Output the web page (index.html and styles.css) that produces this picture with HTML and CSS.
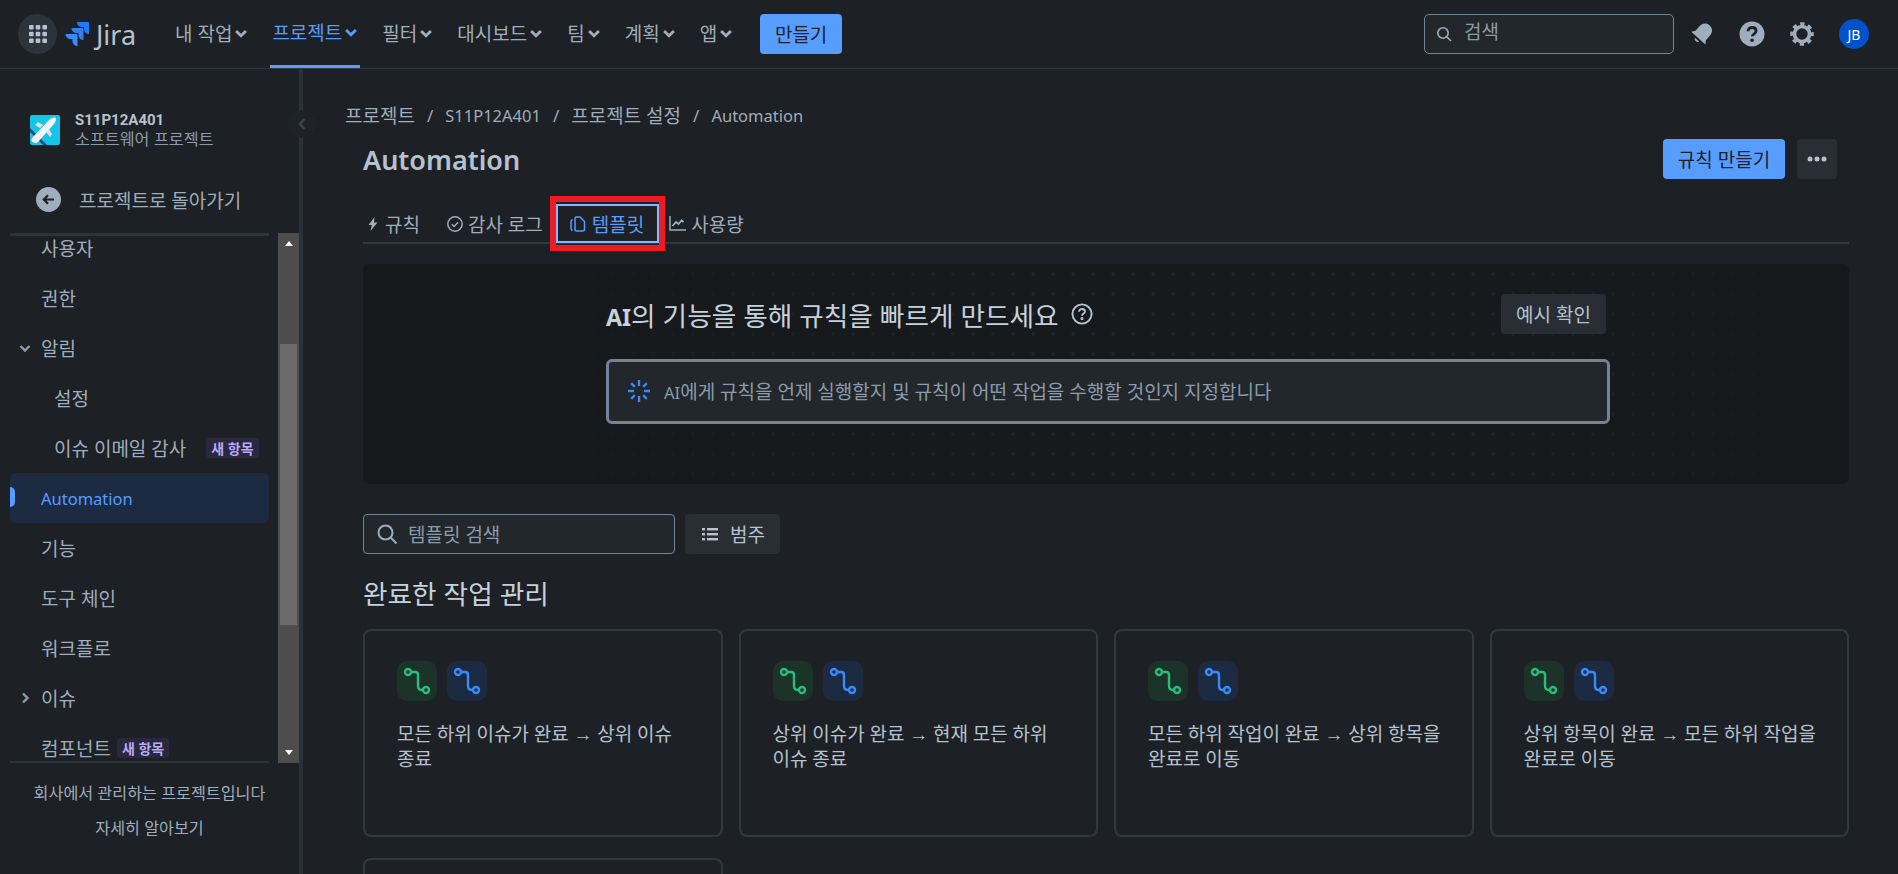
FILE: index.html
```html
<!DOCTYPE html>
<html lang="ko">
<head>
<meta charset="utf-8">
<title>Automation</title>
<link rel="stylesheet" href="styles.css">
</head>
<body>
<header class="topbar">
	<div class="apps">
		<svg width="18" height="18" viewBox="0 0 18 18" fill="#B6C2CF"><rect x="0" y="0" width="4.6" height="4.6" rx="1"/><rect x="6.7" y="0" width="4.6" height="4.6" rx="1"/><rect x="13.4" y="0" width="4.6" height="4.6" rx="1"/><rect x="0" y="6.7" width="4.6" height="4.6" rx="1"/><rect x="6.7" y="6.7" width="4.6" height="4.6" rx="1"/><rect x="13.4" y="6.7" width="4.6" height="4.6" rx="1"/><rect x="0" y="13.4" width="4.6" height="4.6" rx="1"/><rect x="6.7" y="13.4" width="4.6" height="4.6" rx="1"/><rect x="13.4" y="13.4" width="4.6" height="4.6" rx="1"/></svg>
	</div>
	<div class="logo">
		<svg width="24" height="24" viewBox="0 0 24 24"><path fill="#1D7AFC" d="M23 0H12c0 2.7 2.2 5 5 5h2v2c0 2.8 2.2 5 5 5V1a1 1 0 0 0-1-1z"/><path fill="#357DE8" d="M17.5 6h-11c0 2.7 2.2 5 5 5h2v2c0 2.8 2.2 5 5 5V7a1 1 0 0 0-1-1z"/><path fill="#388BFF" d="M11.5 12H.5c0 2.7 2.2 5 5 5h2v2c0 2.8 2.2 5 5 5V13a1 1 0 0 0-1-1z"/></svg>
		<span class="logo-name">Jira</span>
	</div>
	<nav class="topnav">
		<a class="topnav-item">내 작업<svg class="chev" viewBox="0 0 10 10"><path d="M1.5 3.5 5 7l3.5-3.5"/></svg></a>
		<a class="topnav-item active">프로젝트<svg class="chev" viewBox="0 0 10 10"><path d="M1.5 3.5 5 7l3.5-3.5"/></svg></a>
		<a class="topnav-item">필터<svg class="chev" viewBox="0 0 10 10"><path d="M1.5 3.5 5 7l3.5-3.5"/></svg></a>
		<a class="topnav-item">대시보드<svg class="chev" viewBox="0 0 10 10"><path d="M1.5 3.5 5 7l3.5-3.5"/></svg></a>
		<a class="topnav-item">팀<svg class="chev" viewBox="0 0 10 10"><path d="M1.5 3.5 5 7l3.5-3.5"/></svg></a>
		<a class="topnav-item">계획<svg class="chev" viewBox="0 0 10 10"><path d="M1.5 3.5 5 7l3.5-3.5"/></svg></a>
		<a class="topnav-item">앱<svg class="chev" viewBox="0 0 10 10"><path d="M1.5 3.5 5 7l3.5-3.5"/></svg></a>
	</nav>
	<button class="btn primary create">만들기</button>
	<div class="spacer"></div>
	<div class="topsearch">
		<svg width="16" height="16" viewBox="0 0 16 16" fill="none" stroke="#9FADBC" stroke-width="1.6"><circle cx="7" cy="7" r="5.2"/><path d="m11 11 4 4"/></svg>
		<span>검색</span>
	</div>
	<div class="topicons">
		<svg width="26" height="26" viewBox="0 0 26 26" fill="#9FADBC"><g transform="rotate(42 13 13)"><path d="M13 1.500c-4.400 0-7 3.300-7 7.500v6l-2.500 3.500h19L20 15V9c0-4.200-2.600-7.500-7-7.500z"/><path d="M10.300 20.500a2.800 2.800 0 0 0 5.400 0z"/></g></svg>
		<svg width="26" height="26" viewBox="0 0 26 26"><circle cx="13" cy="13" r="12.500" fill="#9FADBC"/><path d="M9 10.300c0-2.400 1.800-3.800 4.100-3.800s4 1.400 4 3.500c0 3-3.900 3-3.900 5.300" fill="none" stroke="#1D2125" stroke-width="2.800"/><circle cx="13.100" cy="19.300" r="1.800" fill="#1D2125"/></svg>
		<svg width="26" height="26" viewBox="0 0 26 26" fill="none" stroke="#9FADBC"><circle cx="13" cy="13" r="7.500" stroke-width="3.600"/><circle cx="13" cy="13" r="10.300" stroke-width="3" stroke-dasharray="4.300 3.790" stroke-dashoffset="2.150"/></svg>
		<div class="avatar">JB</div>
	</div>
</header>

<div class="page">
	<aside class="sidebar">
		<div class="project">
			<svg class="project-icon" width="30" height="30" viewBox="0 0 30 30"><rect width="30" height="30" rx="2" fill="#14C5E8"/><path d="M0 13 17 30h-4L0 17z" fill="#2B4A7C"/><path d="M3 22 19 5c2-2 5.500-3 6.500-2s0 4.500-2 6.500L8 27c-1.500 1.500-5 1-6-.5s-.5-3 1-4.500z" fill="#F4F5F7"/><path d="m5 10 3-3 5 3-3 3zM20 22l2-3-3-5-3 3z" fill="#DFE1E6"/></svg>
			<div>
				<div class="project-name">S11P12A401</div>
				<div class="project-sub">소프트웨어 프로젝트</div>
			</div>
		</div>
		<div class="back">
			<svg width="25" height="25" viewBox="0 0 25 25"><circle cx="12.500" cy="12.500" r="12.500" fill="#9FADBC"/><path d="M18 12.500H8m4-4.200-4.200 4.200 4.200 4.200" fill="none" stroke="#1D2125" stroke-width="2.200"/></svg>
			<span>프로젝트로 돌아가기</span>
		</div>
		<div class="navwrap">
			<div class="navscroll">
				<ul class="sidenav">
					<li class="side-item">사용자</li>
					<li class="side-item">권한</li>
					<li class="side-item"><svg class="side-chev" viewBox="0 0 12 12"><path d="M1.500 4 6 8.500 10.500 4"/></svg>알림</li>
					<li class="side-item sub">설정</li>
					<li class="side-item sub">이슈 이메일 감사<span class="badge">새 항목</span></li>
					<li class="side-item selected"><span class="lat-big">Automation</span></li>
					<li class="side-item">기능</li>
					<li class="side-item">도구 체인</li>
					<li class="side-item">워크플로</li>
					<li class="side-item"><svg class="side-chev" viewBox="0 0 12 12"><path d="M4 1.500 8.500 6 4 10.500"/></svg>이슈</li>
					<li class="side-item">컴포넌트<span class="badge tight">새 항목</span></li>
				</ul>
			</div>
			<div class="scrollbar">
				<div class="arrow up"></div>
				<div class="track"><div class="thumb"></div></div>
				<div class="arrow down"></div>
			</div>
		</div>
		<div class="side-foot">
			<div>회사에서 관리하는 프로젝트입니다</div>
			<div class="learn">자세히 알아보기</div>
		</div>
		<div class="collapse"><svg width="10" height="14" viewBox="0 0 10 14" fill="none" stroke="#3A424A" stroke-width="2.500"><path d="M7.500 2 3 7l4.500 5"/></svg></div>
	</aside>

	<main class="main">
		<div class="crumbs">
			<span>프로젝트</span><i>/</i><span class="lat-big">S11P12A401</span><i>/</i><span>프로젝트 설정</span><i>/</i><span class="lat-big">Automation</span>
		</div>
		<div class="titlerow">
			<h1 class="title">Automation</h1>
			<button class="btn primary rule">규칙 만들기</button>
			<button class="btn neutral more"><svg width="20" height="6" viewBox="0 0 20 6" fill="#B6C2CF"><circle cx="3" cy="3" r="2.500"/><circle cx="10" cy="3" r="2.500"/><circle cx="17" cy="3" r="2.500"/></svg></button>
		</div>

		<div class="tabs">
			<a class="tab first"><svg width="12" height="16" viewBox="0 0 12 16" fill="#9FADBC"><path d="M7.500 1 1.500 9h3.300L3.500 15l7-8.500H7z"/></svg>규칙</a>
			<a class="tab audit"><svg width="16" height="16" viewBox="0 0 16 16" fill="none" stroke="#9FADBC" stroke-width="1.500"><circle cx="8" cy="8" r="7.200"/><path d="m4.800 8.200 2.300 2.200 4-4.200"/></svg>감사 로그</a>
			<a class="tab current"><svg width="16" height="16" viewBox="0 0 16 16" fill="none" stroke="#579DFF" stroke-width="1.500"><path d="M2.500 3.500C1.500 4 1 5 1 6v6c0 1 .5 2 1.500 2.500"/><path d="M5 2.500a1.500 1.500 0 0 1 1.500-1.500H10l4.500 4.500v8a1.500 1.500 0 0 1-1.500 1.500H6.500A1.500 1.500 0 0 1 5 13.500z"/></svg>템플릿</a>
			<a class="tab usage"><svg width="17" height="15" viewBox="0 0 17 15" fill="none" stroke="#9FADBC" stroke-width="1.500"><path d="M1 0v14h16"/><path d="m3.500 10 3.500-4 2.500 2 3-3.500 2 1.500" stroke-width="1.800"/></svg>사용량</a>
		</div>

		<section class="hero">
			<div class="hero-inner">
				<div class="hero-head">
					<h2 class="hero-title"><b class="lat">AI</b>의 기능을 통해 규칙을 빠르게 만드세요</h2>
					<svg class="hero-help" width="22" height="22" viewBox="0 0 20 20" fill="none" stroke="#B6C2CF" stroke-width="1.700"><circle cx="10" cy="10" r="8.700"/><path d="M7.300 8c0-1.600 1.200-2.500 2.700-2.500s2.700.9 2.700 2.300c0 2-2.700 2-2.700 3.700"/><circle cx="10" cy="14.200" r=".6"/></svg>
					<div class="spacer"></div>
					<button class="btn neutral example">예시 확인</button>
				</div>
				<div class="ai-input">
					<svg width="22" height="22" viewBox="0 0 22 22" fill="none" stroke="#388BFF" stroke-width="2.400"><path d="M11 0v6M11 16v6M0 11h6M16 11h6M3.200 3.200l3.600 3.600M15.200 15.200l3.600 3.600M18.800 3.200l-3.600 3.600M6.800 15.200l-3.600 3.600"/></svg>
					<span><span class="lat">AI</span>에게 규칙을 언제 실행할지 및 규칙이 어떤 작업을 수행할 것인지 지정합니다</span>
				</div>
			</div>
		</section>

		<div class="filters">
			<div class="tpl-search">
				<svg width="20" height="20" viewBox="0 0 20 20" fill="none" stroke="#9FADBC" stroke-width="2"><circle cx="8.500" cy="8.500" r="7"/><path d="m13.500 13.500 6 6"/></svg>
				<span>템플릿 검색</span>
			</div>
			<button class="btn neutral cats"><svg width="16" height="14" viewBox="0 0 16 14" fill="#B6C2CF"><rect y="1" width="3" height="2.400"/><rect x="5" y="1" width="11" height="2.400"/><rect y="6" width="3" height="2.400"/><rect x="5" y="6" width="11" height="2.400"/><rect y="11" width="3" height="2.400"/><rect x="5" y="11" width="11" height="2.400"/></svg>범주</button>
		</div>

		<h2 class="group-title">완료한 작업 관리</h2>

		<div class="cards">
			<div class="card">
				<div class="tiles">
					<div class="tile green"><svg width="40" height="40" viewBox="0 0 40 40" fill="none" stroke="#2ABB7F" stroke-width="2.400"><circle cx="11" cy="11" r="3"/><path d="M14 11h4q3 0 3 3v11q0 4 4 4h1"/><circle cx="29" cy="29" r="3"/></svg></div>
					<div class="tile blue"><svg width="40" height="40" viewBox="0 0 40 40" fill="none" stroke="#388BFF" stroke-width="2.400"><circle cx="11" cy="11" r="3"/><path d="M14 11h4q3 0 3 3v11q0 4 4 4h1"/><circle cx="29" cy="29" r="3"/></svg></div>
				</div>
				<p class="card-text">모든 하위 이슈가 완료 → 상위 이슈 종료</p>
			</div>
			<div class="card">
				<div class="tiles">
					<div class="tile green"><svg width="40" height="40" viewBox="0 0 40 40" fill="none" stroke="#2ABB7F" stroke-width="2.400"><circle cx="11" cy="11" r="3"/><path d="M14 11h4q3 0 3 3v11q0 4 4 4h1"/><circle cx="29" cy="29" r="3"/></svg></div>
					<div class="tile blue"><svg width="40" height="40" viewBox="0 0 40 40" fill="none" stroke="#388BFF" stroke-width="2.400"><circle cx="11" cy="11" r="3"/><path d="M14 11h4q3 0 3 3v11q0 4 4 4h1"/><circle cx="29" cy="29" r="3"/></svg></div>
				</div>
				<p class="card-text">상위 이슈가 완료 → 현재 모든 하위 이슈 종료</p>
			</div>
			<div class="card">
				<div class="tiles">
					<div class="tile green"><svg width="40" height="40" viewBox="0 0 40 40" fill="none" stroke="#2ABB7F" stroke-width="2.400"><circle cx="11" cy="11" r="3"/><path d="M14 11h4q3 0 3 3v11q0 4 4 4h1"/><circle cx="29" cy="29" r="3"/></svg></div>
					<div class="tile blue"><svg width="40" height="40" viewBox="0 0 40 40" fill="none" stroke="#388BFF" stroke-width="2.400"><circle cx="11" cy="11" r="3"/><path d="M14 11h4q3 0 3 3v11q0 4 4 4h1"/><circle cx="29" cy="29" r="3"/></svg></div>
				</div>
				<p class="card-text">모든 하위 작업이 완료 → 상위 항목을 완료로 이동</p>
			</div>
			<div class="card">
				<div class="tiles">
					<div class="tile green"><svg width="40" height="40" viewBox="0 0 40 40" fill="none" stroke="#2ABB7F" stroke-width="2.400"><circle cx="11" cy="11" r="3"/><path d="M14 11h4q3 0 3 3v11q0 4 4 4h1"/><circle cx="29" cy="29" r="3"/></svg></div>
					<div class="tile blue"><svg width="40" height="40" viewBox="0 0 40 40" fill="none" stroke="#388BFF" stroke-width="2.400"><circle cx="11" cy="11" r="3"/><path d="M14 11h4q3 0 3 3v11q0 4 4 4h1"/><circle cx="29" cy="29" r="3"/></svg></div>
				</div>
				<p class="card-text">상위 항목이 완료 → 모든 하위 작업을 완료로 이동</p>
			</div>
			<div class="card"></div>
		</div>
	</main>
</div>
</body>
</html>
```

FILE: styles.css
```css
* {
	box-sizing: border-box;
}
html, body {
	margin: 0;
	height: 100%;
	overflow: hidden;
}
body {
	background: #1D2125;
	color: #B6C2CF;
	font-family: "Noto Sans", "Noto Sans CJK KR", sans-serif;
	font-size: 19px;
}
.spacer {
	flex: 1;
}
.lat {
	font-size: .87em;
}
.lat-big {
	font-size: 16.5px;
}
.btn {
	border: 0;
	border-radius: 4px;
	font: inherit;
	height: 40px;
	padding: 0 0 1px;
	display: flex;
	align-items: center;
	justify-content: center;
}
.btn.primary {
	background: #579DFF;
	color: #1D2125;
}
.btn.neutral {
	background: #282E33;
	color: #B6C2CF;
}

/* top bar */
.topbar {
	height: 69px;
	border-bottom: 1px solid #31383F;
	display: flex;
	align-items: center;
	padding: 0 29px 0 18px;
}
.apps {
	width: 39px;
	height: 40px;
	border-radius: 50%;
	background: #2C333A;
	display: flex;
	align-items: center;
	justify-content: center;
}
.logo {
	display: flex;
	align-items: center;
	margin-left: 8px;
	gap: 7px;
	width: 96px;
}
.logo-name {
	font-size: 27px;
	color: #B6C2CF;
}
.topnav {
	display: flex;
	height: 68px;
	margin-left: 12px;
}
.topnav-item {
	display: flex;
	align-items: center;
	padding: 0 2px 2px;
	margin-right: 20px;
	color: #9FADBC;
}
.topnav-item.active {
	color: #579DFF;
	border-bottom: 3px solid #579DFF;
	padding-top: 1px;
}
.chev {
	width: 14px;
	height: 14px;
	margin-left: 2px;
	fill: none;
	stroke: currentColor;
	stroke-width: 2;
}
.create {
	width: 82px;
	margin-left: 5px;
}
.topsearch {
	width: 250px;
	height: 40px;
	background: #22272B;
	border: 1px solid #738496;
	border-radius: 5px;
	display: flex;
	align-items: center;
	gap: 12px;
	padding: 0 11px;
	color: #8C9BAB;
}
.topsearch span {
	margin-top: -6px;
}
.topicons {
	display: flex;
	align-items: center;
	gap: 24px;
	margin-left: 15px;
}
.avatar {
	width: 30px;
	height: 30px;
	border-radius: 50%;
	background: #0052CC;
	color: #fff;
	font-size: 14px;
	display: flex;
	align-items: center;
	justify-content: center;
}

/* sidebar */
.page {
	display: flex;
	height: 805px;
}
.sidebar {
	width: 303px;
	flex: none;
	border-right: 4px solid #2C3138;
	display: flex;
	flex-direction: column;
	position: relative;
}
.project {
	display: flex;
	align-items: center;
	gap: 15px;
	padding: 42px 0 0 30px;
}
.project-name {
	font-family: Roboto, sans-serif;
	font-size: 15px;
	font-weight: 700;
	line-height: 19px;
}
.project-sub {
	font-family: "Liberation Sans", "Noto Sans CJK KR", sans-serif;
	font-size: 16.2px;
	color: #8C9BAB;
	line-height: 18px;
}
.back {
	display: flex;
	align-items: center;
	gap: 18px;
	padding-left: 36px;
	margin-top: 39px;
	height: 25px;
	color: #9FADBC;
}
.navwrap {
	display: flex;
	height: 530px;
	margin-top: 21px;
}
.navscroll {
	width: 260px;
	margin: 0 9px 0 10px;
	overflow: hidden;
	border-top: 3px solid #2C333A;
	border-bottom: 2px solid #2C333A;
}
.sidenav {
	list-style: none;
	margin: -13px 0 0;
	padding: 0;
}
.side-item {
	height: 50px;
	display: flex;
	align-items: center;
	padding-left: 31px;
	color: #9FADBC;
	position: relative;
}
.side-item.sub {
	padding-left: 44px;
}
.side-item.selected {
	background: #1C2B41;
	color: #579DFF;
	border-radius: 6px;
}
.side-item.selected::before {
	content: "";
	position: absolute;
	left: 0;
	top: 14px;
	width: 5px;
	height: 20px;
	background: #579DFF;
	border-radius: 0 5px 5px 0;
}
.side-chev {
	position: absolute;
	left: 9px;
	width: 12px;
	height: 12px;
	fill: none;
	stroke: #8C9BAB;
	stroke-width: 2.400;
}
.badge {
	background: #2B273F;
	color: #B8ACF6;
	font-size: 14px;
	font-weight: 700;
	border-radius: 4px;
	height: 20px;
	padding: 0 5px;
	display: flex;
	align-items: center;
	margin-left: 20px;
}
.badge.tight {
	margin-left: 6px;
}
.scrollbar {
	width: 21px;
	background: #4D4D4D;
	display: flex;
	flex-direction: column;
	align-items: center;
}
.arrow {
	height: 21px;
	flex: none;
	display: flex;
	align-items: center;
}
.arrow::before {
	content: "";
	border-left: 4px solid transparent;
	border-right: 4px solid transparent;
}
.arrow.up::before {
	border-bottom: 5px solid #fff;
}
.arrow.down::before {
	border-top: 5px solid #fff;
}
.track {
	flex: 1;
	width: 100%;
	padding: 90px 2px 117px;
}
.thumb {
	height: 100%;
	background: #6B6B6B;
}
.side-foot {
	text-align: center;
	font-size: 16.2px;
	color: #9FADBC;
	padding-top: 17px;
}
.side-foot .learn {
	margin-top: 11px;
}
.collapse {
	position: absolute;
	top: 41px;
	right: -17px;
	width: 28px;
	height: 28px;
	border-radius: 50%;
	background: #1F2327;
	display: flex;
	align-items: center;
	justify-content: center;
}

/* main */
.main {
	flex: 1;
	min-width: 0;
	padding: 34px 49px 0 60px;
	overflow: hidden;
}
.crumbs {
	margin-left: -18px;
	height: 24px;
	display: flex;
	align-items: center;
	color: #9FADBC;
}
.crumbs i {
	font-style: normal;
	font-size: 17px;
	margin: 0 12px;
}
.titlerow {
	display: flex;
	align-items: center;
	margin-top: 12px;
	height: 40px;
	padding-right: 12px;
}
.title {
	flex: 1;
	margin: 0;
	font-size: 27px;
	font-weight: 600;
	color: #B6C2CF;
}
.rule {
	width: 122px;
}
.more {
	width: 40px;
	margin-left: 12px;
}
.tabs {
	display: flex;
	margin-top: 25px;
	height: 40px;
	border-bottom: 2px solid #31383F;
}
.tab {
	display: flex;
	align-items: center;
	gap: 6px;
	padding: 0 14px;
	color: #9FADBC;
	height: 39px;
	position: relative;
}
.tab.first {
	padding-left: 4px;
}
.tab.audit {
	gap: 5px;
	padding: 0 13px;
}
.tab.usage {
	gap: 5px;
	padding-left: 10px;
}
.tab.current {
	color: #579DFF;
	border: 2px solid #85B8FF;
	padding: 0 13px 0 12px;
}
.tab.current::after {
	content: "";
	position: absolute;
	top: -10px;
	bottom: -10px;
	left: -8px;
	right: -8px;
	border: 6px solid #ED1C24;
}
.hero {
	margin-top: 20px;
	height: 220px;
	border-radius: 6px;
	background-color: #161A1D;
	background-image: linear-gradient(90deg, #161A1D 10%, rgba(22, 26, 29, 0) 45%, rgba(22, 26, 29, 0) 75%, #161A1D 98%), radial-gradient(circle, #202529 1.500px, transparent 2px);
	background-size: 100% 100%, 20px 20px;
	padding: 30px 0 0 243px;
}
.hero-inner {
	width: 1004px;
}
.hero-head {
	display: flex;
	align-items: center;
	height: 40px;
	padding-right: 4px;
}
.hero-title {
	margin: 0;
	font-size: 26.7px;
	font-weight: 400;
	color: #C7D1DB;
}
.hero-title b {
	font-weight: 700;
}
.hero-help {
	margin-left: 12px;
}
.example {
	width: 105px;
}
.ai-input {
	margin-top: 25px;
	height: 65px;
	background: #22272B;
	border: 3px solid #738496;
	border-radius: 6px;
	display: flex;
	align-items: center;
	gap: 14px;
	padding: 0 0 2px 19px;
	color: #8C9BAB;
}
.filters {
	display: flex;
	gap: 10px;
	margin-top: 30px;
}
.tpl-search {
	width: 312px;
	height: 40px;
	background: #22272B;
	border: 1px solid #738496;
	border-radius: 4px;
	display: flex;
	align-items: center;
	gap: 11px;
	padding-left: 13px;
	color: #8C9BAB;
}
.cats {
	width: 95px;
	gap: 12px;
	padding-left: 2px;
}
.group-title {
	margin: 20px 0 0;
	height: 40px;
	font-size: 26.7px;
	font-weight: 400;
	line-height: 40px;
	color: #C7D1DB;
}
.cards {
	display: grid;
	grid-template-columns: repeat(4, 1fr);
	grid-auto-rows: 208px;
	gap: 21px 16px;
	margin-top: 15px;
}
.card {
	border: 2px solid #31383F;
	border-radius: 8px;
	padding: 30px 24px 30px 32px;
}
.tiles {
	display: flex;
	gap: 10px;
}
.tile {
	width: 40px;
	height: 40px;
	border-radius: 10px;
}
.tile svg {
	display: block;
}
.tile.green {
	background: #1C3329;
}
.tile.blue {
	background: #1C2B41;
}
.card-text {
	margin: 21px 0 0;
	line-height: 25px;
	color: #B6C2CF;
	font-family: "Liberation Sans", "Noto Sans CJK KR", sans-serif;
	word-spacing: -.5px;
	word-break: keep-all;
}
```
